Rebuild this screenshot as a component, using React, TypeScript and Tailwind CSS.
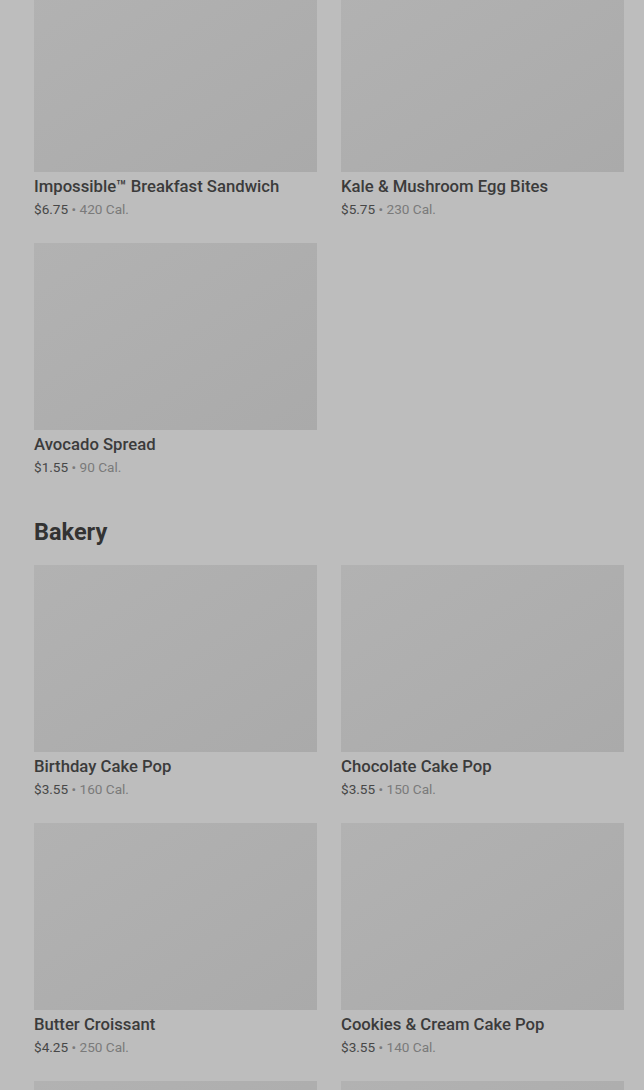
const breakfast = [
  { name: "Impossible™ Breakfast Sandwich", price: "$6.75", cal: "420 Cal." },
  { name: "Kale & Mushroom Egg Bites", price: "$5.75", cal: "230 Cal." },
  { name: "Avocado Spread", price: "$1.55", cal: "90 Cal." },
];

const bakery = [
  { name: "Birthday Cake Pop", price: "$3.55", cal: "160 Cal." },
  { name: "Chocolate Cake Pop", price: "$3.55", cal: "150 Cal." },
  { name: "Butter Croissant", price: "$4.25", cal: "250 Cal." },
  { name: "Cookies & Cream Cake Pop", price: "$3.55", cal: "140 Cal." },
  { name: "Cheese Danish", price: "$3.95", cal: "290 Cal." },
  { name: "Blueberry Muffin", price: "$3.45", cal: "360 Cal." },
];

type Item = { name: string; price: string; cal: string };

function ItemCard({ item }: { item: Item }) {
  return (
    <div className="flex flex-col">
      <div className="h-[187px] w-full bg-gradient-to-br from-[#b2b2b2] via-[#aeaeae] to-[#aaaaaa]" />
      <div className="mt-[5px] text-[16.7px] leading-[20px] font-medium text-[#3b3b3b] whitespace-nowrap">
        {item.name}
      </div>
      <div className="mt-[3px] text-[13.6px] leading-[18px] text-[#474747]">
        {item.price}
        <span className="text-[#7a7a7a]"> • {item.cal}</span>
      </div>
    </div>
  );
}

export default function App() {
  return (
    <div
      className="h-[1090px] w-[644px] overflow-hidden bg-[#bdbdbd]"
      style={{ fontFamily: "Roboto, 'Liberation Sans', sans-serif" }}
    >
      <div className="-mt-[15px] pl-[34px] pr-[20px]">
        <div className="grid grid-cols-2 gap-x-[24px] gap-y-[25px]">
          {breakfast.map((item) => (
            <ItemCard key={item.name} item={item} />
          ))}
        </div>

        <h2 className="mt-[42px] text-[23.5px] leading-[28px] font-bold text-[#333333]">Bakery</h2>

        <div className="mt-[19px] grid grid-cols-2 gap-x-[24px] gap-y-[25px]">
          {bakery.map((item) => (
            <ItemCard key={item.name} item={item} />
          ))}
        </div>
      </div>
    </div>
  );
}
